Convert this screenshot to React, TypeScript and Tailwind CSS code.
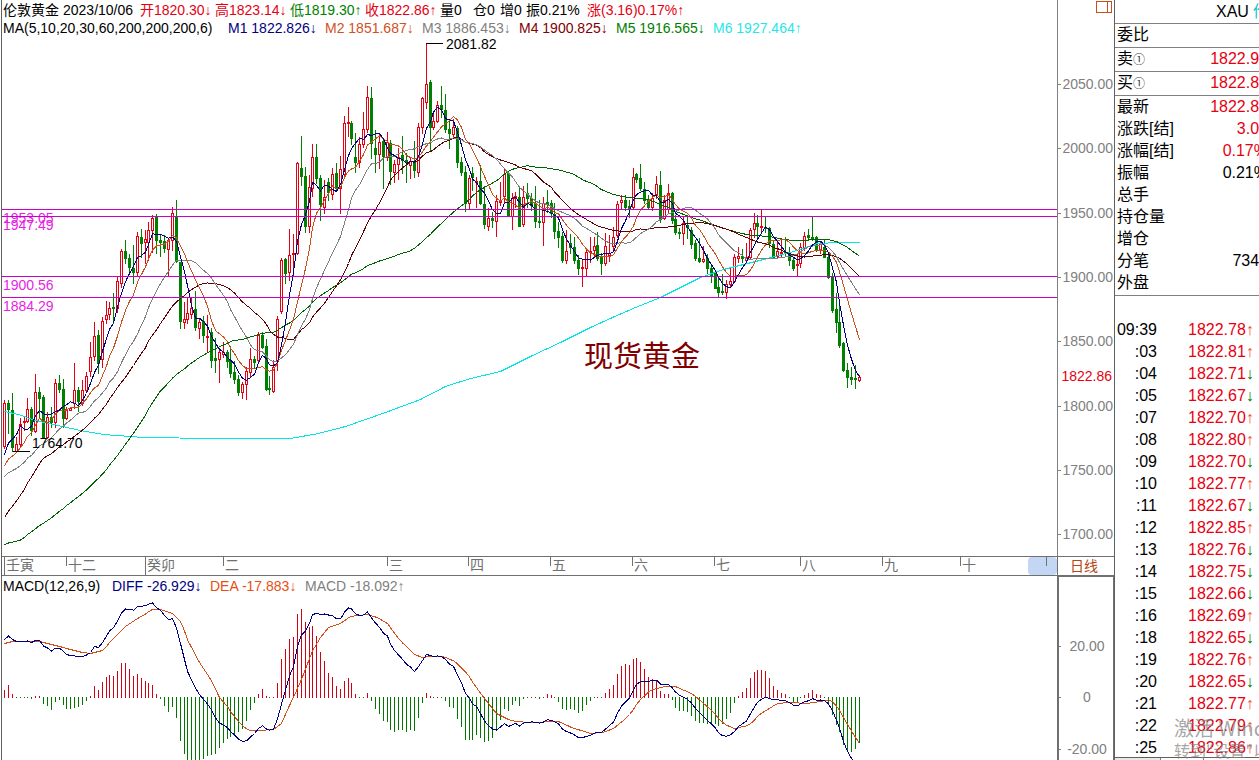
import React from "react";

// [direction, high, body top, body bottom, low], direction 1 = up day, 0 = down day
const candles = [
  [1,400,403,446,448],[0,400,403,409,433],[0,393,410,447,451],[1,437,444,451,452],[1,418,424,444,446],
  [1,417,421,422,430],[1,398,409,421,422],[0,407,409,430,435],[1,374,392,431,432],[0,387,392,398,417],
  [0,395,397,437,438],[1,412,417,437,438],[0,407,417,422,427],[1,379,383,422,427],[0,375,383,389,392],
  [0,379,389,418,427],[1,407,409,418,419],[1,407,408,410,410],[1,363,390,403,408],[0,387,390,401,411],
  [1,380,390,403,405],[1,372,376,390,392],[1,342,357,371,376],[1,322,336,356,360],[0,330,335,363,373],
  [1,317,321,359,367],[1,301,315,319,323],[1,302,308,314,319],[0,293,307,308,323],[1,276,281,308,312],
  [1,249,251,283,287],[0,240,251,258,263],[0,254,258,267,273],[0,245,268,272,283],[1,232,236,272,276],
  [0,229,237,243,257],[1,230,239,242,263],[1,222,230,242,260],[1,215,218,230,252],[0,214,217,240,253],
  [0,235,240,242,256],[0,235,241,248,252],[1,238,240,249,276],[1,207,213,240,250],[0,200,217,261,262],
  [0,262,262,321,328],[1,302,319,322,328],[1,297,313,319,323],[1,298,308,314,318],[0,291,309,327,330],
  [1,318,322,328,338],[0,316,321,335,342],[1,315,336,337,351],[0,328,332,360,367],[0,338,358,360,372],
  [1,350,352,359,382],[1,342,352,354,357],[0,350,352,361,367],[0,346,360,373,377],[0,361,372,379,383],
  [0,375,379,392,395],[1,382,384,392,398],[1,367,371,384,399],[1,348,359,372,377],[0,356,359,362,368],
  [1,332,335,360,363],[0,332,335,347,348],[0,339,346,389,390],[0,376,388,389,394],[1,360,367,391,392],
  [1,316,319,361,370],[1,258,260,311,313],[0,258,259,273,283],[1,229,255,272,280],[1,234,253,254,275],
  [1,162,163,253,254],[0,136,168,176,185],[0,167,176,226,232],[1,175,187,226,232],[1,144,157,188,196],
  [0,144,157,178,183],[0,175,178,204,220],[1,180,197,207,213],[0,178,182,192,200],[1,168,174,194,199],
  [0,163,173,188,190],[1,156,169,188,213],[1,116,123,174,176],[1,107,122,123,136],[0,121,123,138,144],
  [0,133,157,162,172],[1,137,144,162,167],[1,112,129,144,147],[1,86,97,129,132],[0,87,98,143,158],
  [0,130,148,154,172],[1,133,142,154,168],[0,138,141,156,188],[1,132,142,157,160],[0,140,143,171,184],
  [1,160,164,172,182],[1,148,157,164,179],[0,136,155,160,173],[0,153,160,162,182],[1,158,161,165,178],
  [0,141,161,170,177],[1,123,127,172,176],[1,97,98,127,133],[1,43,84,102,108],[0,80,82,127,150],
  [1,113,121,127,129],[1,101,105,121,122],[0,86,105,109,117],[0,94,110,129,132],[0,120,129,133,148],
  [1,119,127,134,138],[0,126,128,162,167],[0,157,162,172,175],[0,166,172,203,211],[1,175,178,203,208],
  [0,167,173,177,190],[1,177,181,182,207],[0,165,181,203,204],[0,186,204,224,228],[1,208,218,226,230],
  [0,212,218,220,227],[1,195,201,221,236],[1,182,200,202,205],[1,169,174,196,203],[0,172,173,215,216],
  [1,193,198,216,229],[1,192,196,198,207],[0,187,197,226,226],[1,186,197,224,226],[0,183,193,198,207],
  [0,193,198,205,210],[0,186,203,221,227],[0,200,221,222,227],[1,197,203,222,245],[0,190,202,204,212],
  [0,200,203,213,217],[0,203,214,231,238],[0,222,231,237,247],[0,232,236,260,262],[1,230,251,260,263],
  [0,234,243,247,253],[0,237,247,260,263],[0,255,260,268,274],[1,260,267,268,286],[1,248,252,268,276],
  [1,237,251,252,262],[1,237,246,250,257],[0,232,245,258,260],[0,253,257,263,274],[1,233,246,263,265],
  [1,235,253,255,261],[1,227,237,246,251],[1,201,204,235,237],[1,195,200,202,209],[0,195,200,207,210],
  [0,200,206,208,217],[1,168,177,207,208],[0,173,174,179,182],[0,164,178,188,190],[0,182,189,200,203],
  [0,195,200,207,209],[1,193,198,207,210],[1,176,184,194,198],[0,171,185,219,222],[1,195,200,218,219],
  [1,184,193,209,212],[0,192,193,220,223],[0,215,219,232,234],[0,228,232,233,238],[1,216,223,233,244],
  [0,215,225,227,238],[0,227,230,244,248],[0,240,243,258,260],[0,238,258,261,262],[1,246,259,261,262],
  [0,254,258,268,273],[0,264,268,275,282],[0,271,273,288,288],[0,278,287,292,297],[0,274,291,292,294],
  [1,280,284,292,298],[1,268,281,284,287],[1,254,257,281,282],[1,247,256,258,262],[0,249,256,258,262],
  [1,243,257,260,263],[1,228,230,257,258],[1,213,223,229,237],[0,215,223,226,237],[1,209,226,227,232],
  [0,217,227,228,232],[0,227,228,243,247],[0,240,244,257,258],[1,240,251,256,257],[1,240,252,253,256],
  [0,237,252,253,255],[0,247,252,260,265],[0,257,260,268,270],[1,253,264,265,276],[1,243,247,263,267],
  [1,232,236,247,250],[0,229,235,237,240],[0,217,237,238,240],[0,236,237,249,251],[1,241,243,250,253],
  [0,240,247,257,257],[0,253,257,277,278],[0,273,277,310,312],[0,293,309,322,332],[0,303,322,345,347],
  [0,342,343,370,371],[0,363,370,377,387],[0,367,377,379,384],[0,365,378,379,388],[1,375,377,380,381],
];

// closes from before the first visible day, oldest first
const earlier = [
  ...Array(4).fill(500),
  ...Array(26).fill(582),
  ...Array(10).fill(599),
  ...Array(10).fill(487),
  ...Array(5).fill(476),
  ...Array(4).fill(467),
];

const histogram = [
  8,13,4,0,0,0,1,-2,2,2,-7,-9,-13,-5,-3,-8,-12,-12,-11,-10,-8,-4,2,12,8,16,21,23,22,27,35,35,29,22,24,20,17,15,13,4,
  -2,-9,-15,-10,-21,-44,-57,-63,-65,-66,-64,-62,-59,-58,-57,-51,-46,-42,-40,-37,-35,-32,-24,-13,-6,4,9,2,-1,1,15,39,
  49,59,61,84,89,76,71,72,62,46,37,25,21,12,9,17,20,15,4,0,0,5,-4,-12,-17,-24,-25,-33,-35,-33,-33,-35,-33,-34,-21,-6,
  5,2,0,1,0,-4,-10,-11,-22,-30,-43,-43,-43,-38,-41,-45,-44,-41,-33,-23,-12,-14,-8,-4,-9,-2,0,1,0,-2,0,4,3,0,-5,-12,
  -13,-12,-13,-16,-14,-8,-4,0,1,0,5,9,13,24,32,34,33,39,40,36,29,21,19,17,7,4,4,-3,-11,-14,-14,-15,-19,-24,-26,-26,
  -27,-27,-27,-29,-27,-22,-16,-6,2,6,10,20,26,28,28,27,20,12,8,5,4,0,-5,-6,-1,3,5,8,4,3,0,-8,-18,-28,-35,-48,-54,-55,
  -52,-46,
];

// [day, y]
const deaPoints = [
  [0,643],[2,641],[9,641],[13,645],[16,648],[20,652],[22,653],[25,650],[28,638],[31,626],[34,618],[38,609],[40,609],
  [43,613],[45,621],[46.7,637],[50,662],[52.7,678],[55,697],[57.4,708],[60.4,723],[62.5,730],[65,730],[69,729],[71,723],
  [73,705],[75.7,682],[78.3,655],[81,637],[83,627],[86,623],[88.5,616],[93,614],[95.4,617],[98.4,624],[101.4,640],
  [105,654],[107,657],[109,656],[112.4,656],[115.4,661],[118.4,673],[123,698],[126,713],[129.5,720],[134,722],[142,721],
  [145.3,727],[150,733],[153.4,732],[156,728],[159.4,717],[163,699],[165.4,690],[169,686],[172,686],[176.5,694],
  [181,710],[184.6,724],[187,728],[190.5,725],[193.5,714],[198,703],[201,702],[205.5,703],[209,701],[211.5,699],
  [214,710],[216.6,728],[219,743],
];

const m6Points =
  "4,411 18,414 35,420 53,424 80,430 103,434 143,437 213,438 290,438 318,433 345,426 385,412 420,399 445,386 470,378 500,371 530,356 560,342 590,327 612,317 635,307 660,297 700,277 723,269 767,258 793,251 817,243 838,242 859,242";

const levels = [
  { y: 209, label: "1953.05" },
  { y: 216, label: "1947.49" },
  { y: 276, label: "1900.56" },
  { y: 297, label: "1884.29" },
];

const months = [
  { x: 4, label: "壬寅", long: true },
  { x: 66, label: "十二" },
  { x: 145, label: "癸卯", long: true },
  { x: 223, label: "二" },
  { x: 387, label: "三" },
  { x: 468, label: "四" },
  { x: 550, label: "五" },
  { x: 632, label: "六" },
  { x: 714, label: "七" },
  { x: 800, label: "八" },
  { x: 882, label: "九" },
  { x: 960, label: "十" },
];

const prices = [
  { y: 84, label: "2050.00" },
  { y: 148, label: "2000.00" },
  { y: 213, label: "1950.00" },
  { y: 277, label: "1900.00" },
  { y: 341, label: "1850.00" },
  { y: 406, label: "1800.00" },
  { y: 470, label: "1750.00" },
  { y: 534, label: "1700.00" },
];

const quotes = [
  { name: "最新", value: "1822.86", color: "text-[#e60012]" },
  { name: "涨跌[结]", value: "3.05", color: "text-[#e60012]" },
  { name: "涨幅[结]", value: "0.17%", color: "text-[#e60012]" },
  { name: "振幅", value: "0.21%", color: "text-black" },
  { name: "总手", value: "", color: "text-black" },
  { name: "持仓量", value: "", color: "text-black" },
  { name: "增仓", value: "", color: "text-black" },
  { name: "分笔", value: "7340", color: "text-black" },
  { name: "外盘", value: "", color: "text-black" },
];

const ticks = [
  ["09:39", "1822.78", "↑"],
  [":03", "1822.81", "↑"],
  [":04", "1822.71", "↓"],
  [":05", "1822.67", "↓"],
  [":07", "1822.70", "↑"],
  [":08", "1822.80", "↑"],
  [":09", "1822.70", "↓"],
  [":10", "1822.77", "↑"],
  [":11", "1822.67", "↓"],
  [":12", "1822.85", "↑"],
  [":13", "1822.76", "↓"],
  [":14", "1822.75", "↓"],
  [":15", "1822.66", "↓"],
  [":16", "1822.69", "↑"],
  [":18", "1822.65", "↓"],
  [":19", "1822.76", "↑"],
  [":20", "1822.65", "↓"],
  [":21", "1822.77", "↑"],
  [":22", "1822.79", "↑"],
  [":25", "1822.86", "↑"],
];

const dayX = (i: number) => 4 + Math.round(i * 3.904);

const closes = [...earlier, ...candles.map((c) => (c[0] ? c[2] : c[3]))];

function average(period: number) {
  return candles
    .map((_, i) => {
      const end = earlier.length + i + 1;
      const sum = closes.slice(end - period, end).reduce((a, b) => a + b, 0);
      return `${dayX(i)},${(sum / period).toFixed(1)}`;
    })
    .join(" ");
}

function deaAt(day: number) {
  const next = Math.max(1, deaPoints.findIndex((p) => p[0] >= day));
  const [x0, y0] = deaPoints[next - 1];
  const [x1, y1] = deaPoints[next];
  return y0 + ((y1 - y0) * (day - x0)) / (x1 - x0);
}

const dea = histogram.map((_, i) => `${dayX(i)},${deaAt(i).toFixed(1)}`).join(" ");
const diff = histogram.map((h, i) => `${dayX(i)},${(deaAt(i) - h / 2).toFixed(1)}`).join(" ");

function Candle({ day, data }: { day: number; data: number[] }) {
  const [up, high, top, bottom, low] = data;
  const x = dayX(day);
  if (up) {
    return (
      <path
        d={`M${x + 0.5} ${high}V${top}M${x + 0.5} ${bottom}V${low + 1}M${x - 0.5} ${top + 0.5}h2V${bottom + 0.5}h-2Z`}
        stroke="#e60012"
        fill="none"
      />
    );
  }
  return <path d={`M${x} ${high}h1V${low + 1}h-1ZM${x - 1} ${top}h3V${bottom + 1}h-3Z`} fill="#008000" />;
}

function PriceChart() {
  return (
    <svg className="block w-full h-[520px]" shapeRendering="crispEdges" fontSize="14">
      <g transform="translate(-2 -36)">
        {candles.map((c, i) => (
          <Candle key={i} day={i} data={c} />
        ))}
        <g fill="none" transform="translate(0.5 0.5)">
          <polyline points={m6Points} stroke="#00e5e5" />
          <polyline points={average(60)} stroke="#006400" />
          <polyline points={average(30)} stroke="#600000" />
          <polyline points={average(20)} stroke="#808080" />
          <polyline points={average(10)} stroke="#c8501e" />
          <polyline points={average(5)} stroke="#000080" />
        </g>
        {levels.map((l) => (
          <g key={l.label}>
            <rect x="2" y={l.y} width="100%" height="1" fill="#c800c8" />
            <text x="3" y={l.y + 14} fill="#e61ee6">{l.label}</text>
          </g>
        ))}
        <path d="M426 43.5h17M13 451.5h17" stroke="#000" />
        <text x="446" y="49">2081.82</text>
        <text x="32" y="448">1764.70</text>
        <text x="584" y="367" fontSize="29" fill="#800000">现货黄金</text>
      </g>
    </svg>
  );
}

function MacdChart() {
  return (
    <svg className="block w-full flex-1 min-h-0" shapeRendering="crispEdges">
      <g transform="translate(-2 -596)">
        {histogram.map((h, i) => (
          <rect
            key={i}
            x={dayX(i)}
            y={h > 0 ? 698 - h : 697}
            width="1"
            height={Math.abs(h) || 1}
            fill={h > 0 ? "#d20014" : "#007800"}
          />
        ))}
        <g fill="none" transform="translate(0.5 0.5)">
          <polyline points={dea} stroke="#d2501e" />
          <polyline points={diff} stroke="#000080" />
        </g>
      </g>
    </svg>
  );
}

function ChartHeader() {
  return (
    <header className="h-9 pt-px text-sm leading-[18px] whitespace-nowrap pl-px">
      <div className="flex">
        <h1 className="w-[60px]">伦敦黄金</h1>
        <span className="w-[77px]">2023/10/06</span>
        <span className="w-[75px] text-[#e60012]">开1820.30↓</span>
        <span className="w-[75px] text-[#e60012]">高1823.14↓</span>
        <span className="w-[75px] text-[#008000]">低1819.30↑</span>
        <span className="w-[75px] text-[#e60012]">收1822.86↑</span>
        <span className="w-[33px]">量0</span>
        <span className="w-[27px]">仓0</span>
        <span className="w-[26px]">增0</span>
        <span className="w-[61px]">振0.21%</span>
        <span className="text-[#e60012]">涨(3.16)0.17%↑</span>
      </div>
      <div className="flex">
        <span className="w-[225px]">MA(5,10,20,30,60,200,200,200,6)</span>
        <span className="w-[97px] text-[#000080]">M1 1822.826↓</span>
        <span className="w-[97px] text-[#d2501e]">M2 1851.687↓</span>
        <span className="w-[97px] text-[#808080]">M3 1886.453↓</span>
        <span className="w-[97px] text-[#800000]">M4 1900.825↓</span>
        <span className="w-[97px] text-[#008000]">M5 1916.565↓</span>
        <span className="text-[#28e6e6]">M6 1927.464↑</span>
      </div>
    </header>
  );
}

function SidePanel() {
  return (
    <aside className="relative w-[145px] shrink-0 border-l border-[#606060] overflow-hidden text-base">
      {/* wider than the column, the last digits run off the edge */}
      <div className="w-[153px] h-full flex flex-col">
        <div className="h-6 shrink-0 border-b border-[#808080] pl-[101px] flex gap-1 whitespace-nowrap leading-6">
          <span>XAU</span>
          <span className="text-[#00c8c8]">伦敦金</span>
        </div>
        <dl className="shrink-0 border-b border-[#808080] pb-px">
          <div className="h-6 border-b border-[#808080] px-0.5 leading-[22px]">
            <dt>委比</dt>
          </div>
          <div className="h-6 border-b border-[#808080] pl-0.5 leading-[22px] flex justify-between">
            <dt>卖<span className="text-xs text-[#404040]">①</span></dt>
            <dd className="text-[#e60012]">1822.96</dd>
          </div>
          <div className="h-6 border-b border-[#808080] pl-0.5 leading-[22px] flex justify-between">
            <dt>买<span className="text-xs text-[#404040]">①</span></dt>
            <dd className="text-[#e60012]">1822.86</dd>
          </div>
          {quotes.map((q) => (
            <div key={q.name} className="h-[22px] pl-0.5 leading-[22px] flex justify-between">
              <dt>{q.name}</dt>
              <dd className={q.color}>{q.value}</dd>
            </div>
          ))}
        </dl>
        <div className="flex-1 min-h-0 overflow-hidden pt-[23px]">
          <table className="leading-[22px]">
            <tbody>
              {ticks.map(([time, price, arrow]) => (
                <tr key={time} className="h-[22px]">
                  <td className="w-[42px] p-0 text-right">{time}</td>
                  <td className="p-0 pl-[31px] text-[#e60012]">
                    {price}
                    <span className={arrow === "↑" ? "text-[#f05032]" : "text-[#008000]"}>{arrow}</span>
                  </td>
                </tr>
              ))}
            </tbody>
          </table>
        </div>
        <div className="h-[3px] shrink-0 border-t border-[#606060] flex">
          <div className="w-[46px] bg-[#e8e8e8] border-r border-[#808080]" />
          <div className="w-[43px] border-r border-[#808080]" />
        </div>
      </div>
      {/* system watermark */}
      <div className="absolute left-[59px] bottom-0 whitespace-nowrap text-[#808080]/70 font-['Noto_Sans_CJK_SC',sans-serif]">
        <p className="text-xl leading-6">激活 Windows</p>
        <p className="text-base leading-5">转到"设置"以激活 Windows。</p>
      </div>
    </aside>
  );
}

export default function App() {
  return (
    <div className="h-screen flex overflow-hidden bg-white text-black pl-px font-['Liberation_Sans','Noto_Sans_CJK_SC',sans-serif]">
      <main className="flex-1 min-w-0 flex flex-col border-l border-[#606060]">
        <div className="flex shrink-0">
          <section className="flex-1 min-w-0">
            <ChartHeader />
            <PriceChart />
          </section>
          <div className="relative w-[57px] shrink-0 border-l border-[#808080]">
            <svg className="block w-full h-[556px]" fontSize="14" textAnchor="end">
              {prices.map((p) => (
                <g key={p.label} fill="#808080">
                  <rect x="0" y={p.y} width="3" height="1" />
                  <text x="55" y={p.y + 5}>{p.label}</text>
                </g>
              ))}
              <text x="54" y="381" fill="#e60012">1822.86</text>
            </svg>
            <button className="absolute top-0 right-px p-px" aria-label="窗口">
              <svg className="block" width="16" height="12" fill="none" stroke="#c8501e" shapeRendering="crispEdges">
                <path d="M0.5 0.5h15v11h-15ZM11.5 0v12" />
              </svg>
            </button>
          </div>
        </div>

        {/* Time axis */}
        <div className="h-5 shrink-0 flex border-y border-[#707070]">
          <div className="flex-1 min-w-0 flex">
            <svg className="block flex-1 min-w-0 h-full" fontSize="14" fill="#707070">
              <g transform="translate(-2 0)">
                {months.map((m) => (
                  <g key={m.x}>
                    <rect x={m.x} y="0" width="1" height={m.long ? 18 : 9} />
                    <text x={m.x + 2} y="13">{m.label}</text>
                  </g>
                ))}
              </g>
            </svg>
            <div className="w-[29px] rounded bg-[#c3d7f5] flex justify-center pl-2">
              <div className="w-px h-[9px] bg-[#707070]" />
            </div>
          </div>
          <button className="w-[57px] shrink-0 border-l border-[#707070] pr-1 text-sm leading-[18px] text-[#b44614]">日线</button>
        </div>

        {/* MACD */}
        <div className="flex-1 min-h-0 flex">
          <section className="flex-1 min-w-0 flex flex-col">
            <div className="flex h-5 shrink-0 pl-px text-sm leading-5 whitespace-nowrap">
              <span className="w-[109px]">MACD(12,26,9)</span>
              <span className="w-[98px] text-[#000080]">DIFF -26.929↓</span>
              <span className="w-[95px] text-[#e65014]">DEA -17.883↓</span>
              <span className="text-[#808080]">MACD -18.092↑</span>
            </div>
            <MacdChart />
          </section>
          <div className="w-[57px] shrink-0 border-l-2 border-t border-r border-[#707070]">
            <svg className="block w-full h-full" fontSize="14" fill="#808080" textAnchor="middle">
              <rect x="0" y="69" width="2" height="1" />
              <rect x="0" y="120" width="2" height="1" />
              <rect x="0" y="172" width="2" height="1" />
              <text x="28" y="74">20.00</text>
              <text x="28" y="125">0</text>
              <text x="28" y="177">-20.00</text>
            </svg>
          </div>
        </div>
      </main>
      <SidePanel />
    </div>
  );
}
